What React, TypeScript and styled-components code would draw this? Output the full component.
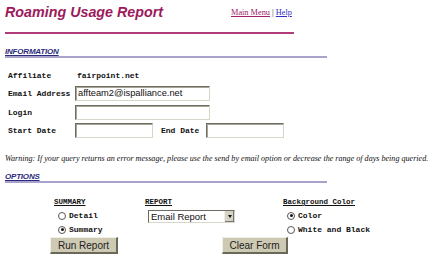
import React from 'react';
import styled, { createGlobalStyle } from 'styled-components';

const GlobalStyle = createGlobalStyle`
  body {
    margin: 0;
    background: #ffffff;
  }
`;

const Page = styled.div`
  padding: 3px 5px 0 5px;
  width: 430px;
  box-sizing: border-box;
`;

const Header = styled.div`
  display: flex;
  align-items: flex-end;
  width: 289px;
  height: 20px;
  padding-bottom: 9px;
  border-bottom: 2px solid #b03c7c;
`;

const Title = styled.h1`
  margin: 0;
  width: 226px;
  font-family: 'Liberation Sans', Arial, sans-serif;
  font-weight: bold;
  font-style: italic;
  font-size: 14.3px;
  line-height: 18px;
  color: #9c1a5c;
  align-self: flex-start;
`;

const Links = styled.div`
  font-family: 'Liberation Serif', 'Times New Roman', serif;
  font-size: 8.3px;
  color: #333;
  margin-bottom: 6px;
`;

const Link = styled.a<{ $tone: string }>`
  color: ${(p) => p.$tone};
  text-decoration: underline;
`;

const Section = styled.div<{ $top: number }>`
  margin-top: ${(p) => p.$top}px;
  width: 322px;
  border-bottom: 2px solid #a8a2cc;
  font-family: 'Liberation Sans', Arial, sans-serif;
  font-weight: bold;
  font-style: italic;
  font-size: 8px;
  line-height: 9px;
  color: #2a2a7a;
  text-decoration: underline;
  letter-spacing: -0.2px;
`;

const FormGrid = styled.div`
  display: grid;
  grid-template-columns: 67px auto;
  grid-auto-rows: 18.5px;
  align-items: center;
  margin-top: 8px;
  padding-left: 3px;
`;

const Label = styled.div`
  font-family: 'Liberation Mono', 'Courier New', monospace;
  font-weight: bold;
  font-size: 8px;
  color: #111;
`;

const Value = styled(Label)`
  padding-left: 2px;
`;

const Field = styled.div<{ $w: number }>`
  width: ${(p) => p.$w}px;
  height: 15px;
  box-sizing: border-box;
  border-top: 1px solid #6e6c62;
  border-left: 1px solid #6e6c62;
  border-right: 1px solid #d8d6c8;
  border-bottom: 1px solid #d8d6c8;
  box-shadow: inset 1px 1px 0 #a8a698;
  background: #fff;
  font-family: 'Liberation Sans', Arial, sans-serif;
  font-size: 9.3px;
  line-height: 13px;
  padding-left: 2px;
  color: #111;
  white-space: nowrap;
  overflow: hidden;
`;

const DateRow = styled.div`
  display: flex;
  align-items: center;
`;

const EndLabel = styled(Label)`
  width: 45px;
  padding-left: 8px;
`;

const Warning = styled.p`
  margin: 14px 0 0 0;
  font-family: 'Liberation Serif', 'Times New Roman', serif;
  font-style: italic;
  font-size: 8.1px;
  line-height: 10px;
  color: #111;
  white-space: nowrap;
`;

const Options = styled.div`
  display: grid;
  grid-template-columns: 91px 138px auto;
  margin-top: 15px;
  padding-left: 49px;
`;

const Column = styled.div`
  display: flex;
  flex-direction: column;
`;

const ColHead = styled(Label)`
  text-decoration: underline;
  font-size: 7.5px;
  line-height: 9px;
`;

const RadioRow = styled.div<{ $top: number }>`
  display: flex;
  align-items: center;
  margin-top: ${(p) => p.$top}px;
  padding-left: 4px;
  gap: 3px;
`;

const Radio = styled.span<{ $on?: boolean }>`
  width: 8px;
  height: 8px;
  border-radius: 50%;
  border: 1px solid #555;
  box-sizing: border-box;
  background: #fff;
  display: inline-flex;
  align-items: center;
  justify-content: center;
  &::after {
    content: '';
    width: 3px;
    height: 3px;
    border-radius: 50%;
    background: ${(p) => (p.$on ? '#111' : 'transparent')};
  }
`;

const Select = styled.div`
  margin: 3px 0 0 3px;
  width: 87px;
  height: 13px;
  box-sizing: border-box;
  border-top: 1px solid #6e6c62;
  border-left: 1px solid #6e6c62;
  border-right: 1px solid #d8d6c8;
  border-bottom: 1px solid #d8d6c8;
  display: flex;
  background: #fff;
`;

const SelectText = styled.div`
  flex: 1;
  font-family: 'Liberation Sans', Arial, sans-serif;
  font-size: 9.5px;
  line-height: 11px;
  padding-left: 2px;
  color: #111;
`;

const Arrow = styled.div`
  width: 9px;
  background: #d6d2c4;
  border-left: 1px solid #eee;
  box-shadow: inset -1px -1px 0 #777;
  display: flex;
  align-items: center;
  justify-content: center;
  &::after {
    content: '';
    border-left: 2px solid transparent;
    border-right: 2px solid transparent;
    border-top: 3px solid #111;
  }
`;

const Buttons = styled.div`
  display: flex;
  margin-top: 3px;
  padding-left: 45px;
`;

const Button = styled.button<{ $w: number; $gap: number }>`
  width: ${(p) => p.$w}px;
  height: 17px;
  margin-left: ${(p) => p.$gap}px;
  padding: 0;
  background: #cdc9b2;
  border-top: 1px solid #f2f0e4;
  border-left: 1px solid #f2f0e4;
  border-right: 2px solid #6a6858;
  border-bottom: 2px solid #6a6858;
  font-family: 'Liberation Sans', Arial, sans-serif;
  font-size: 10px;
  color: #222;
`;

export default function App() {
  return (
    <>
      <GlobalStyle />
      <Page>
        <Header>
          <Title>Roaming Usage Report</Title>
          <Links>
            <Link href="#" $tone="#a0206a">Main Menu</Link> | <Link href="#" $tone="#3030c0">Help</Link>
          </Links>
        </Header>

        <Section $top={13}>INFORMATION</Section>

        <FormGrid>
          <Label>Affiliate</Label>
          <Value>fairpoint.net</Value>
          <Label>Email Address</Label>
          <Field $w={135}>affteam2@ispalliance.net</Field>
          <Label>Login</Label>
          <Field $w={135} />
          <Label>Start Date</Label>
          <DateRow>
            <Field $w={78} />
            <EndLabel>End Date</EndLabel>
            <Field $w={78} />
          </DateRow>
        </FormGrid>

        <Warning>
          Warning: If your query returns an error message, please use the send by email option or decrease the range of days being queried.
        </Warning>

        <Section $top={8}>OPTIONS</Section>

        <Options>
          <Column>
            <ColHead>SUMMARY</ColHead>
            <RadioRow $top={4}>
              <Radio />
              <Label>Detail</Label>
            </RadioRow>
            <RadioRow $top={5}>
              <Radio $on />
              <Label>Summary</Label>
            </RadioRow>
          </Column>
          <Column>
            <ColHead>REPORT</ColHead>
            <Select>
              <SelectText>Email Report</SelectText>
              <Arrow />
            </Select>
          </Column>
          <Column>
            <ColHead>Background Color</ColHead>
            <RadioRow $top={4}>
              <Radio $on />
              <Label>Color</Label>
            </RadioRow>
            <RadioRow $top={5}>
              <Radio />
              <Label>White and Black</Label>
            </RadioRow>
          </Column>
        </Options>

        <Buttons>
          <Button $w={68} $gap={0}>Run Report</Button>
          <Button $w={66} $gap={104}>Clear Form</Button>
        </Buttons>
      </Page>
    </>
  );
}
